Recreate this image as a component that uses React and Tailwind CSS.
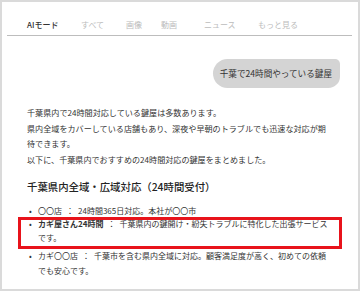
export default function App() {
  const font = { fontFamily: '"Noto Sans CJK JP", "Noto Sans", sans-serif' };
  return (
    <div
      className="w-[360px] h-[291px] bg-white border-2 border-[#dadada] overflow-hidden text-[#333]"
      style={font}
    >
      {/* tabs */}
      <div className="mx-[5px] mr-[6px] pt-[17px] pb-[4px] border-b border-[#bdbdbd] flex pl-[20px] text-[8px] leading-[12px]">
        <div className="w-[54px] font-medium text-[#333]">AIモード</div>
        <div className="w-[45px] text-[#bcbcbc]">すべて</div>
        <div className="w-[35px] text-[#bcbcbc]">画像</div>
        <div className="w-[43px] text-[#bcbcbc]">動画</div>
        <div className="w-[54px] text-[#bcbcbc]">ニュース</div>
        <div className="text-[#bcbcbc]">もっと見る</div>
      </div>

      {/* bubble */}
      <div className="flex justify-end pr-[18px] mt-[23px]">
        <div className="h-[29px] flex items-center pl-[7px] pr-[8px] bg-[#d4d4d4] rounded-l-[15px] rounded-tr-[5px] rounded-br-[12px] text-[8.6px] text-[#333]">
          千葉で24時間やっている鍵屋
        </div>
      </div>

      {/* paragraph */}
      <div className="pl-[25px] mt-[17px] w-[330px] text-[8.1px] leading-[15.5px] text-[#333]">
        <p>千葉県内で24時間対応している鍵屋は多数あります。</p>
        <p>
          県内全域をカバーしている店舗もあり、深夜や早朝のトラブルでも迅速な対応が期
          <br />
          待できます。
        </p>
        <p>以下に、千葉県内でおすすめの24時間対応の鍵屋をまとめました。</p>
      </div>

      {/* heading */}
      <h2 className="pl-[25px] mt-[12px] text-[10.4px] leading-[16px] font-medium text-[#222]">
        千葉県内全域・広域対応（24時間受付）
      </h2>

      {/* list */}
      <div className="relative mt-[9px] pl-[25px] text-[8px] leading-[15px] text-[#333]">
        <div className="flex leading-[13px]">
          <span className="w-[11px] pl-[2px]">•</span>
          <span className="whitespace-nowrap">〇〇店{"\u2002"}：{"\u2002"}24時間365日対応。本社が〇〇市</span>
        </div>
        <div className="flex leading-[14px]">
          <span className="w-[11px] pl-[2px]">•</span>
          <span className="whitespace-nowrap">
            <span className="font-bold">カギ屋さん24時間</span>{"\u2002"}：{"\u2002"}千葉県内の鍵開け・紛失トラブルに特化した出張サービス
            <br />
            です。
          </span>
        </div>
        <div className="flex mt-[3px]">
          <span className="w-[11px] pl-[2px]">•</span>
          <span className="whitespace-nowrap">
            カギ〇〇店{"\u2002"}：{"\u2002"}千葉市を含む県内全域に対応。顧客満足度が高く、初めての依頼
            <br />
            でも安心です。
          </span>
        </div>
        <div className="absolute left-[16px] top-[13px] w-[324px] h-[32px] border-[3px] border-[#e8131b]" />
      </div>
    </div>
  );
}
